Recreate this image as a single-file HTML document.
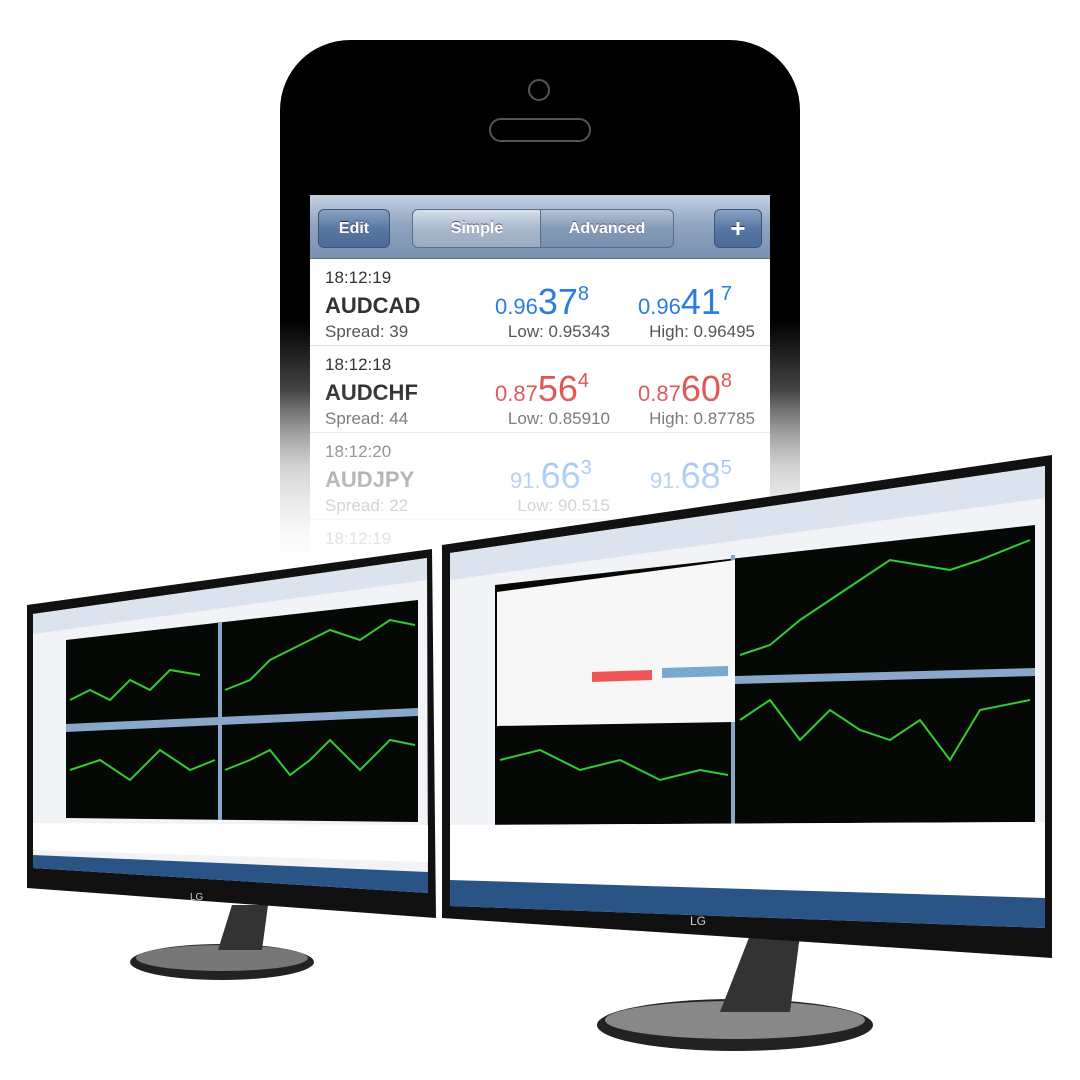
<!DOCTYPE html>
<html><head><meta charset="utf-8"><style>
html,body{margin:0;padding:0;background:#fff;width:1080px;height:1080px;overflow:hidden;position:relative;font-family:"Liberation Sans",Arial,sans-serif}
.phone{position:absolute;left:280px;top:40px;width:520px;height:540px;background:linear-gradient(#000 0%,#000 52%,#fff 100%);border-radius:70px 70px 0 0}
.cam{position:absolute;left:528px;top:79px;width:18px;height:18px;border:2px solid #555;border-radius:50%}
.spk{position:absolute;left:489px;top:118px;width:98px;height:20px;border:2px solid #555;border-radius:12px}
.screen{position:absolute;left:310px;top:195px;width:460px;height:400px;background:#fff}
.bar{height:63px;background:linear-gradient(#c4d1e1,#8ea3bf 50%,#7a91b1);position:relative;border-bottom:1px solid #5d6f89}
.btn{position:absolute;top:14px;height:37px;border:1px solid #3c5679;border-radius:6px;background:linear-gradient(#8aa2c4,#5878a3 50%,#4b6b98);color:#fff;font-weight:bold;font-size:16px;line-height:37px;text-align:center;text-shadow:0 -1px #334}
.seg{position:absolute;top:14px;height:37px;border:1px solid #5b6f8c;background:linear-gradient(#d7dfe9,#a9b8cc 50%,#9aabc2);color:#fff;font-weight:bold;font-size:16px;line-height:37px;text-align:center;text-shadow:0 -1px #556}
.row{height:86px;border-bottom:1px solid #ddd;position:relative}
.t{position:absolute;left:15px;top:9px;font-size:17px;color:#333}
.s{position:absolute;left:15px;top:34px;font-size:22px;font-weight:bold;color:#333}
.sp{position:absolute;left:15px;top:63px;font-size:17px;color:#555}
.p{position:absolute;top:22px;font-size:22px;white-space:nowrap}
.p b{font-size:36px;font-weight:normal}
.p sup{font-size:20px;vertical-align:14px}
.lh{position:absolute;top:63px;font-size:17px;color:#555;text-align:right;width:130px}
.fade{position:absolute;left:250px;top:390px;width:580px;height:220px;background:linear-gradient(rgba(255,255,255,0) 0%,rgba(255,255,255,.6) 35%,#fff 85%)}
</style></head><body>
<div class="phone"></div>
<div class="cam"></div><div class="spk"></div>
<div class="screen">
 <div class="bar">
  <div class="btn" style="left:8px;width:70px">Edit</div>
  <div class="seg" style="left:102px;width:128px;border-radius:6px 0 0 6px">Simple</div>
  <div class="seg" style="left:230px;width:132px;border-radius:0 6px 6px 0;background:linear-gradient(#b4c3d6,#8499b6 50%,#7890b0)">Advanced</div>
  <div class="btn" style="left:404px;width:46px;font-size:26px">+</div>
 </div>
 <div class="row"><div class="t">18:12:19</div><div class="s">AUDCAD</div><div class="sp">Spread: 39</div>
  <div class="p" style="left:185px;color:#2b7de0">0.96<b>37</b><sup>8</sup></div>
  <div class="p" style="left:328px;color:#2b7de0">0.96<b>41</b><sup>7</sup></div>
  <div class="lh" style="left:170px">Low: 0.95343</div><div class="lh" style="left:315px">High: 0.96495</div></div>
 <div class="row"><div class="t">18:12:18</div><div class="s">AUDCHF</div><div class="sp">Spread: 44</div>
  <div class="p" style="left:185px;color:#e05555">0.87<b>56</b><sup>4</sup></div>
  <div class="p" style="left:328px;color:#e05555">0.87<b>60</b><sup>8</sup></div>
  <div class="lh" style="left:170px">Low: 0.85910</div><div class="lh" style="left:315px">High: 0.87785</div></div>
 <div class="row"><div class="t">18:12:20</div><div class="s">AUDJPY</div><div class="sp">Spread: 22</div>
  <div class="p" style="left:200px;color:#2b7de0">91.<b>66</b><sup>3</sup></div>
  <div class="p" style="left:340px;color:#2b7de0">91.<b>68</b><sup>5</sup></div>
  <div class="lh" style="left:170px">Low: 90.515</div></div>
 <div class="row"><div class="t">18:12:19</div></div>
</div>
<div class="fade"></div>
<svg width="1080" height="1080" style="position:absolute;left:0;top:0">
 <ellipse cx="222" cy="962" rx="92" ry="18" fill="#222"/>
 <ellipse cx="222" cy="958" rx="86" ry="13" fill="#777"/>
 <path d="M232 905 L268 905 L262 950 L218 950 Z" fill="#333"/>
 <ellipse cx="735" cy="1025" rx="138" ry="26" fill="#222"/>
 <ellipse cx="735" cy="1020" rx="130" ry="19" fill="#888"/>
 <path d="M750 935 L800 935 L790 1012 L720 1012 Z" fill="#333"/>
 <polygon points="27,605 432,549 436,918 27,888" fill="#111"/>
 <polygon points="33,614 427,558 428,893 33,868" fill="#f1f3f6"/>
 <polygon points="33,614 427,558 427,580 33,634" fill="#dbe3ee"/>
 <polygon points="66,640 418,600 418,822 66,818" fill="#050805"/>
 <polygon points="66,724 418,708 418,716 66,732" fill="#8aa6c8"/>
 <line x1="220" y1="622" x2="220" y2="820" stroke="#8aa6c8" stroke-width="4"/>
 <polygon points="33,855 428,872 428,893 33,868" fill="#2b5486"/>
 <polyline points="70,700 90,690 110,700 130,680 150,690 170,670 200,675" stroke="#3c3" stroke-width="2" fill="none"/>
 <polyline points="225,690 250,680 270,660 290,650 310,640 330,630 360,640 390,620 415,625" stroke="#3c3" stroke-width="2" fill="none"/>
 <polyline points="70,770 100,760 130,780 160,750 190,770 215,760" stroke="#3c3" stroke-width="2" fill="none"/>
 <polyline points="225,770 250,760 270,750 290,775 310,760 330,740 360,770 390,740 415,745" stroke="#3c3" stroke-width="2" fill="none"/>
 <polygon points="33,823 428,825 428,862 33,850" fill="#fff"/>
 <polygon points="442,545 1052,455 1052,958 442,918" fill="#111"/>
 <polygon points="450,553 1045,466 1045,928 450,906" fill="#f1f3f6"/>
 <polygon points="450,553 1045,466 1045,498 450,580" fill="#dbe3ee"/>
 <polygon points="495,585 1035,525 1035,822 495,825" fill="#050805"/>
 <polygon points="735,676 1035,668 1035,676 735,684" fill="#8aa6c8"/>
 <line x1="733" y1="555" x2="733" y2="824" stroke="#8aa6c8" stroke-width="4"/>
 <polygon points="497,592 735,560 735,722 497,726" fill="#f7f7f7"/>
 <polygon points="592,672 652,670 652,680 592,682" fill="#e55"/>
 <polygon points="662,668 728,666 728,676 662,678" fill="#7ac"/>
 <polyline points="740,655 770,645 800,620 830,600 860,580 890,560 920,565 950,570 980,560 1030,540" stroke="#3c3" stroke-width="2" fill="none"/>
 <polyline points="740,720 770,700 800,740 830,710 860,730 890,740 920,720 950,760 980,710 1030,700" stroke="#3c3" stroke-width="2" fill="none"/>
 <polyline points="500,760 540,750 580,770 620,760 660,780 700,770 728,775" stroke="#3c3" stroke-width="2" fill="none"/>
 <polygon points="450,825 1045,822 1045,900 450,895" fill="#fff"/>
 <polygon points="450,880 1045,898 1045,928 450,906" fill="#2b5486"/>
 <text x="690" y="925" fill="#ccc" font-size="12" font-family="Liberation Sans">LG</text>
 <text x="190" y="900" fill="#ccc" font-size="10" font-family="Liberation Sans">LG</text>
</svg>
</body></html>
